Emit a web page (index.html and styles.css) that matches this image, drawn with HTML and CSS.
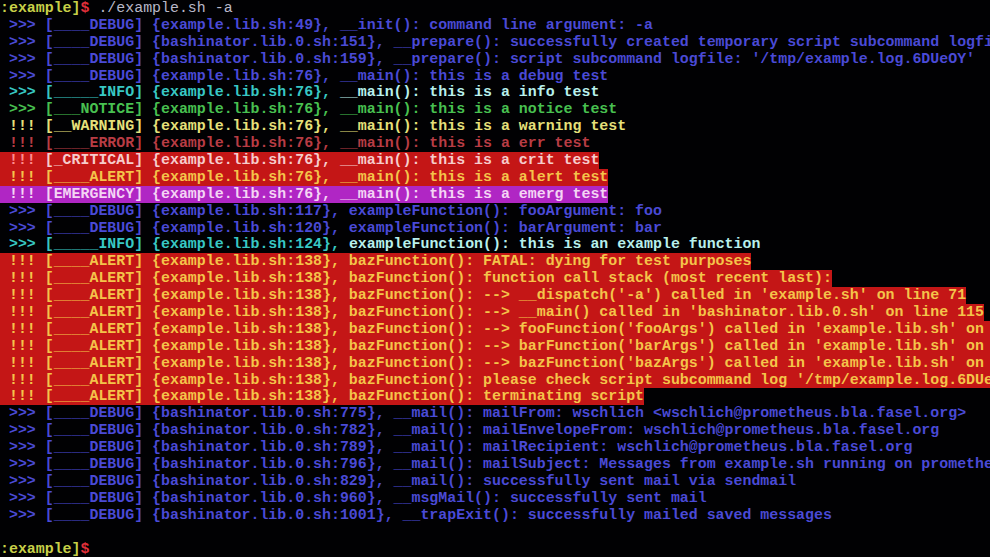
FILE: index.html
```html
<!DOCTYPE html>
<html>
<head>
<meta charset="utf-8">
<link rel="stylesheet" href="styles.css">
</head>
<body>
<div class="term">
<div class="line"><span class="ps">:example]</span><span class="dollar">$</span><span class="cmd"> ./example.sh -a</span></div>
<div class="line debug"><span class="seg"> &gt;&gt;&gt; [____DEBUG] {example.lib.sh:49}, __init(): command line argument: -a</span></div>
<div class="line debug"><span class="seg"> &gt;&gt;&gt; [____DEBUG] {bashinator.lib.0.sh:151}, __prepare(): successfully created temporary script subcommand logfile: '/tmp/example.log.6DUeOY'</span></div>
<div class="line debug"><span class="seg"> &gt;&gt;&gt; [____DEBUG] {bashinator.lib.0.sh:159}, __prepare(): script subcommand logfile: '/tmp/example.log.6DUeOY'</span></div>
<div class="line debug"><span class="seg"> &gt;&gt;&gt; [____DEBUG] {example.lib.sh:76}, __main(): this is a debug test</span></div>
<div class="line info"><span class="seg"> &gt;&gt;&gt; [_____INFO] {example.lib.sh:76}, </span><span class="msg">__main(): this is a info test</span></div>
<div class="line notice"><span class="seg"> &gt;&gt;&gt; [___NOTICE] {example.lib.sh:76}, __main(): this is a notice test</span></div>
<div class="line warning"><span class="seg"> !!! [__WARNING] {example.lib.sh:76}, __main(): this is a warning test</span></div>
<div class="line error"><span class="seg"> !!! [____ERROR] {example.lib.sh:76}, __main(): this is a err test</span></div>
<div class="line crit"><span class="seg"><span class="bang"> !!!</span> [_CRITICAL] {example.lib.sh:76}, __main(): this is a crit test</span></div>
<div class="line alert"><span class="seg"> !!! [____ALERT] {example.lib.sh:76}, __main(): this is a alert test</span></div>
<div class="line emerg"><span class="seg"> !!! [EMERGENCY] {example.lib.sh:76}, __main(): this is a emerg test</span></div>
<div class="line debug"><span class="seg"> &gt;&gt;&gt; [____DEBUG] {example.lib.sh:117}, exampleFunction(): fooArgument: foo</span></div>
<div class="line debug"><span class="seg"> &gt;&gt;&gt; [____DEBUG] {example.lib.sh:120}, exampleFunction(): barArgument: bar</span></div>
<div class="line info"><span class="seg"> &gt;&gt;&gt; [_____INFO] {example.lib.sh:124}, </span><span class="msg">exampleFunction(): this is an example function</span></div>
<div class="line alert"><span class="seg"> !!! [____ALERT] {example.lib.sh:138}, bazFunction(): FATAL: dying for test purposes</span></div>
<div class="line alert"><span class="seg"> !!! [____ALERT] {example.lib.sh:138}, bazFunction(): function call stack (most recent last):</span></div>
<div class="line alert"><span class="seg"> !!! [____ALERT] {example.lib.sh:138}, bazFunction(): --&gt; __dispatch('-a') called in 'example.sh' on line 71</span></div>
<div class="line alert"><span class="seg"> !!! [____ALERT] {example.lib.sh:138}, bazFunction(): --&gt; __main() called in 'bashinator.lib.0.sh' on line 115</span></div>
<div class="line alert"><span class="seg"> !!! [____ALERT] {example.lib.sh:138}, bazFunction(): --&gt; fooFunction('fooArgs') called in 'example.lib.sh' on line 131</span></div>
<div class="line alert"><span class="seg"> !!! [____ALERT] {example.lib.sh:138}, bazFunction(): --&gt; barFunction('barArgs') called in 'example.lib.sh' on line 134</span></div>
<div class="line alert"><span class="seg"> !!! [____ALERT] {example.lib.sh:138}, bazFunction(): --&gt; bazFunction('bazArgs') called in 'example.lib.sh' on line 137</span></div>
<div class="line alert"><span class="seg"> !!! [____ALERT] {example.lib.sh:138}, bazFunction(): please check script subcommand log '/tmp/example.log.6DUeOY' for details</span></div>
<div class="line alert"><span class="seg"> !!! [____ALERT] {example.lib.sh:138}, bazFunction(): terminating script</span></div>
<div class="line debug"><span class="seg"> &gt;&gt;&gt; [____DEBUG] {bashinator.lib.0.sh:775}, __mail(): mailFrom: wschlich &lt;wschlich@prometheus.bla.fasel.org&gt;</span></div>
<div class="line debug"><span class="seg"> &gt;&gt;&gt; [____DEBUG] {bashinator.lib.0.sh:782}, __mail(): mailEnvelopeFrom: wschlich@prometheus.bla.fasel.org</span></div>
<div class="line debug"><span class="seg"> &gt;&gt;&gt; [____DEBUG] {bashinator.lib.0.sh:789}, __mail(): mailRecipient: wschlich@prometheus.bla.fasel.org</span></div>
<div class="line debug"><span class="seg"> &gt;&gt;&gt; [____DEBUG] {bashinator.lib.0.sh:796}, __mail(): mailSubject: Messages from example.sh running on prometheus.bla.fasel.org</span></div>
<div class="line debug"><span class="seg"> &gt;&gt;&gt; [____DEBUG] {bashinator.lib.0.sh:829}, __mail(): successfully sent mail via sendmail</span></div>
<div class="line debug"><span class="seg"> &gt;&gt;&gt; [____DEBUG] {bashinator.lib.0.sh:960}, __msgMail(): successfully sent mail</span></div>
<div class="line debug"><span class="seg"> &gt;&gt;&gt; [____DEBUG] {bashinator.lib.0.sh:1001}, __trapExit(): successfully mailed saved messages</span></div>
<div class="line"> </div>
<div class="line"><span class="ps">:example]</span><span class="dollar">$</span></div>
</div>
</body>
</html>
```
FILE: styles.css
```css
html, body {
  margin: 0;
  padding: 0;
  background: #010103;
}

.term {
  width: 990px;
  height: 557px;
  overflow: hidden;
  display: flex;
  flex-direction: column;
  font-family: "Liberation Mono", "DejaVu Sans Mono", monospace;
  font-size: 14.92px;
  line-height: 16.9px;
  font-weight: bold;
  color: #c8c8d0;
}

.line {
  height: 16.9px;
  flex: none;
  white-space: pre;
  overflow: hidden;
}

.seg, .msg {
  display: inline-block;
  height: 16.9px;
  vertical-align: top;
  white-space: pre;
}

.ps { color: #c8d048; }
.dollar { color: #e0303a; }
.cmd { color: #b8b8c8; font-weight: normal; }

.debug .seg { color: #4a4ad6; }
.info .seg { color: #38c8c4; }
.info .msg { color: #b8f0ec; }
.notice .seg { color: #48c050; }
.warning .seg { color: #e6e07a; }
.error .seg { color: #b83c44; }

.crit .seg { background: #c41616; color: #f6cccc; }
.crit .bang { color: #ff8c8c; }
.alert .seg { background: #c41616; color: #f4c44a; }
.emerg .seg { background: #b026c4; color: #f4d4f4; }
```
